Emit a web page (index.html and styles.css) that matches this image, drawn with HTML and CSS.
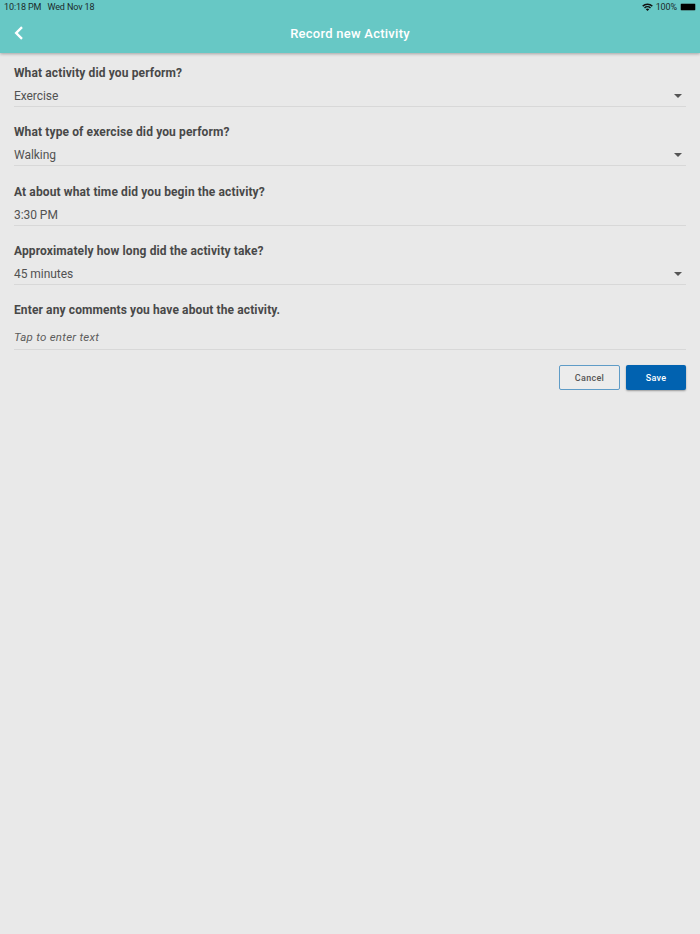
FILE: index.html
```html
<!DOCTYPE html>
<html lang="en">
<head>
    <meta charset="UTF-8">
    <meta name="viewport" content="width=device-width, initial-scale=1.0">
    <title>Record new Activity</title>
    <link rel="stylesheet" href="styles.css">
</head>
<body>
    <header class="app-bar">
        <div class="status-bar">
            <div class="status-left">
                <span>10:18 PM</span>
                <span>Wed Nov 18</span>
            </div>
            <div class="status-right">
                <svg class="wifi" width="11" height="8" viewBox="0 0 11 8">
                    <path d="M0.2 2.6A7.6 7.6 0 0 1 10.8 2.6L9.8 3.7A6.1 6.1 0 0 0 1.2 3.7Z" fill="#111"/>
                    <path d="M2 4.5A5 5 0 0 1 9 4.5L8 5.6A3.5 3.5 0 0 0 3 5.6Z" fill="#111"/>
                    <path d="M3.8 6.3A2.4 2.4 0 0 1 7.2 6.3L5.5 8Z" fill="#111"/>
                </svg>
                <span>100%</span>
                <div class="battery"><div class="battery-fill"></div></div>
            </div>
        </div>
        <div class="title-row">
            <svg class="back" width="10" height="14" viewBox="0 0 10 14">
                <path d="M8 1.2L2.2 7L8 12.8" fill="none" stroke="#fff" stroke-width="2.4"/>
            </svg>
            <h1>Record new Activity</h1>
        </div>
    </header>

    <form class="activity-form">
        <div class="field">
            <label>What activity did you perform?</label>
            <div class="value select">Exercise<span class="caret"></span></div>
        </div>
        <div class="field">
            <label>What type of exercise did you perform?</label>
            <div class="value select">Walking<span class="caret"></span></div>
        </div>
        <div class="field">
            <label>At about what time did you begin the activity?</label>
            <div class="value">3:30 PM</div>
        </div>
        <div class="field">
            <label>Approximately how long did the activity take?</label>
            <div class="value select">45 minutes<span class="caret"></span></div>
        </div>
        <div class="field comments">
            <label>Enter any comments you have about the activity.</label>
            <div class="value placeholder">Tap to enter text</div>
        </div>
        <div class="actions">
            <button type="button" class="btn btn-cancel">Cancel</button>
            <button type="button" class="btn btn-save">Save</button>
        </div>
    </form>
</body>
</html>
```

FILE: styles.css
```css
:root {
    --teal: #67c8c5;
    --page: #e9e9e9;
    --text: #484848;
    --line: #d8d8d8;
    --blue: #0162b0;
}

* {
    box-sizing: border-box;
}

body {
    margin: 0;
    min-height: 934px;
    background-color: var(--page);
    color: var(--text);
    font-family: Roboto, "Liberation Sans", sans-serif;
}

.app-bar {
    height: 53px;
    background-color: var(--teal);
    box-shadow: 0 1px 3px rgba(0, 0, 0, 0.3);
}

.status-bar {
    display: flex;
    justify-content: space-between;
    align-items: center;
    height: 14px;
    padding: 0 4px;
    font-size: 9px;
    letter-spacing: -0.1px;
    color: #1c2b2b;
}

.status-left {
    display: flex;
    gap: 6px;
}

.status-right {
    display: flex;
    align-items: center;
    gap: 3px;
}

.battery {
    width: 16px;
    height: 8px;
    border: 1px solid #4f8f8c;
    border-radius: 2px;
}

.battery-fill {
    height: 100%;
    background-color: #000;
}

.title-row {
    position: relative;
    display: flex;
    justify-content: center;
    align-items: center;
    height: 38px;
}

.title-row h1 {
    margin: 0;
    font-size: 13px;
    font-weight: 500;
    letter-spacing: 0.25px;
    color: #fff;
}

.back {
    position: absolute;
    left: 14px;
    top: 12px;
}

.activity-form {
    padding: 13px 14px 0;
}

.field {
    margin-bottom: 18.33px;
}

.field label {
    display: block;
    font-size: 12px;
    font-weight: 700;
    letter-spacing: 0.12px;
    line-height: 15px;
    margin-bottom: 8px;
}

.value {
    position: relative;
    height: 18px;
    border-bottom: 1px solid var(--line);
    font-size: 12px;
    letter-spacing: -0.05px;
    line-height: 15px;
    color: #525252;
}

.caret {
    position: absolute;
    right: 4px;
    top: 5px;
    border-left: 4px solid transparent;
    border-right: 4px solid transparent;
    border-top: 4px solid #555;
}

.comments {
    margin-bottom: 15px;
}

.comments label {
    margin-bottom: 12px;
}

.comments .value {
    height: 20px;
}

.placeholder {
    font-size: 11.5px;
    font-style: italic;
    letter-spacing: 0.25px;
    color: #5c5c5c;
}

.actions {
    display: flex;
    justify-content: flex-end;
    gap: 6px;
}

.btn {
    width: 61px;
    height: 25px;
    border-radius: 2px;
    font-family: inherit;
    font-size: 9px;
    font-weight: 500;
    letter-spacing: 0.3px;
}

.btn-cancel {
    background-color: #ececec;
    border: 1px solid #5f9cc7;
    color: #555;
}

.btn-save {
    width: 60px;
    background-color: var(--blue);
    border: none;
    color: #fff;
    box-shadow: 0 1px 2px rgba(0, 0, 0, 0.35);
}
```
